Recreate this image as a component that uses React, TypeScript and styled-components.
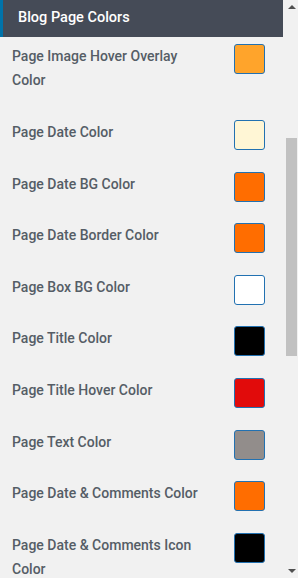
import React from 'react'
import styled, { createGlobalStyle } from 'styled-components'

const GlobalStyle = createGlobalStyle`
    html, body {
        margin: 0;
        padding: 0;
        background: #f1f1f1;
    }
    body {
        font-family: Roboto, "Liberation Sans", Arial, sans-serif;
    }
`

const Frame = styled.div`
    display: flex;
    width: 298px;
    height: 578px;
    overflow: hidden;
    background: #f1f1f1;
`

const Panel = styled.div`
    display: flex;
    flex-direction: column;
    width: 283px;
    flex: none;
`

const Header = styled.h3`
    margin: 0;
    height: 37px;
    flex: none;
    display: flex;
    align-items: center;
    padding-left: 15px;
    padding-bottom: 3px;
    box-sizing: border-box;
    background: #454b57;
    border-left: 3px solid #0073aa;
    color: #ffffff;
    font-size: 14.5px;
    font-weight: 500;
`

const List = styled.div`
    display: flex;
    flex-direction: column;
    flex: none;
    padding: 7px 0 0 12px;
`

const Row = styled.div`
    display: flex;
    flex: none;
    align-items: flex-start;
    padding-bottom: 27.2px;
`

const Label = styled.div`
    width: 195px;
    margin-right: 27px;
    font-size: 14px;
    font-weight: 500;
    line-height: 24.4px;
    color: #555d66;
`

const Swatch = styled.div<{ color: string }>`
    width: 31px;
    height: 30px;
    margin-bottom: -5.6px;
    box-sizing: border-box;
    border: 1px solid #2271b1;
    border-radius: 3px;
    background: ${props => props.color};
    flex: none;
`

const ScrollBar = styled.div`
    position: relative;
    width: 15px;
    flex: none;
    background: #f1f1f1;
`

const Arrow = styled.div<{ down?: boolean }>`
    position: absolute;
    left: 5px;
    width: 0;
    height: 0;
    border-left: 4px solid transparent;
    border-right: 4px solid transparent;
    ${props => props.down
        ? 'bottom: 5px; border-top: 4px solid #505050;'
        : 'top: 5px; border-bottom: 4px solid #505050;'}
`

const Thumb = styled.div`
    position: absolute;
    left: 3px;
    right: 1px;
    top: 138px;
    height: 218px;
    background: #c1c1c1;
`

const colors: [string, string][] = [
    ['Page Image Hover Overlay Color', '#ffa42b'],
    ['Page Date Color', '#fff6d5'],
    ['Page Date BG Color', '#ff6d00'],
    ['Page Date Border Color', '#ff6d00'],
    ['Page Box BG Color', '#ffffff'],
    ['Page Title Color', '#000000'],
    ['Page Title Hover Color', '#e10b0b'],
    ['Page Text Color', '#928d8b'],
    ['Page Date & Comments Color', '#ff6d00'],
    ['Page Date & Comments Icon Color', '#000000'],
]

const App: React.FC = () => {
    return (
        <Frame>
            <GlobalStyle />
            <Panel>
                <Header>Blog Page Colors</Header>
                <List>
                    {colors.map(([label, color], ind) => (
                        <Row key={ind}>
                            <Label>{label}</Label>
                            <Swatch color={color} />
                        </Row>
                    ))}
                </List>
            </Panel>
            <ScrollBar>
                <Arrow />
                <Thumb />
                <Arrow down />
            </ScrollBar>
        </Frame>
    )
}

export default App
